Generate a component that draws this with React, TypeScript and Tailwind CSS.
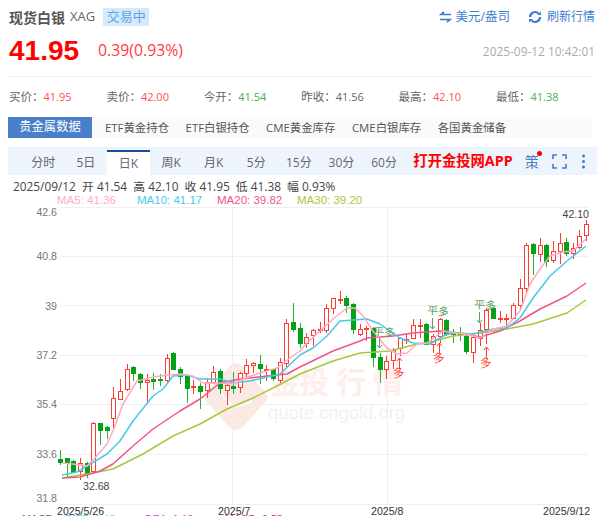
import { Fragment } from 'react'

const RED = '#ff3b30'
const GREEN = '#00a313'

// [top, bottom, high, low, colour]; x comes from the index
const CANDLES: [number, number, number, number, 'r' | 'g'][] = [
  [458, 461, 449, 464, 'g'], [457, 462, 457, 476, 'g'], [460, 471, 459, 472, 'g'], [462, 470, 457, 479, 'r'],
  [462, 472, 461, 477, 'g'], [422, 470, 421, 472, 'r'], [422, 429, 422, 444, 'g'], [426, 429, 425, 438, 'g'],
  [397, 417, 386, 430, 'r'], [390, 398, 378, 399, 'r'], [368, 388, 363, 390, 'r'], [366, 372, 365, 380, 'g'],
  [373, 381, 372, 388, 'g'], [379, 381, 373, 403, 'r'], [378, 380, 372, 389, 'g'], [378, 379, 373, 385, 'g'],
  [357, 379, 353, 383, 'r'], [352, 368, 351, 369, 'g'], [368, 375, 366, 383, 'g'], [375, 387, 373, 402, 'g'],
  [385, 386, 379, 393, 'r'], [385, 390, 382, 408, 'g'], [381, 389, 377, 397, 'r'], [371, 381, 365, 383, 'r'],
  [370, 387, 368, 393, 'g'], [384, 389, 382, 404, 'r'], [385, 387, 371, 393, 'g'], [372, 386, 371, 392, 'r'],
  [364, 372, 358, 377, 'r'], [362, 364, 361, 372, 'r'], [363, 367, 354, 383, 'g'], [368, 369, 364, 380, 'r'],
  [368, 377, 368, 380, 'g'], [361, 379, 357, 382, 'r'], [322, 362, 318, 366, 'r'], [321, 328, 302, 331, 'g'],
  [327, 342, 322, 347, 'g'], [336, 342, 332, 347, 'r'], [329, 334, 328, 345, 'r'], [328, 329, 321, 332, 'r'],
  [307, 329, 303, 332, 'r'], [297, 307, 297, 313, 'r'], [298, 299, 290, 303, 'r'], [297, 304, 295, 312, 'g'],
  [303, 328, 302, 333, 'g'], [328, 333, 323, 335, 'r'], [327, 328, 325, 340, 'r'], [327, 356, 326, 366, 'g'],
  [356, 368, 352, 382, 'g'], [360, 368, 355, 378, 'r'], [349, 359, 347, 368, 'r'], [337, 347, 336, 355, 'r'],
  [338, 339, 333, 343, 'r'], [324, 337, 318, 338, 'r'], [324, 325, 318, 337, 'r'], [323, 343, 322, 344, 'g'],
  [335, 343, 333, 352, 'r'], [318, 335, 317, 342, 'r'], [319, 333, 318, 335, 'g'], [332, 333, 328, 342, 'g'],
  [332, 333, 326, 340, 'g'], [335, 350, 334, 353, 'g'], [336, 351, 333, 362, 'r'], [329, 337, 322, 345, 'r'],
  [309, 328, 307, 343, 'r'], [307, 317, 306, 318, 'g'], [317, 318, 310, 322, 'r'], [317, 318, 313, 328, 'r'],
  [304, 317, 302, 318, 'r'], [287, 304, 278, 310, 'r'], [244, 287, 242, 292, 'r'], [243, 252, 242, 274, 'g'],
  [244, 253, 237, 261, 'r'], [244, 260, 243, 266, 'g'], [250, 259, 240, 262, 'r'], [242, 250, 232, 263, 'r'],
  [241, 252, 237, 255, 'g'], [247, 252, 242, 258, 'r'], [235, 246, 229, 248, 'r'], [223, 234, 219, 240, 'r'],
]

const MA5 = '62,462 73,463 87,465 95,457 107,443 113,430 123,403 137,380 153,376 167,374 180,373 193,375 203,382 220,382 233,383 243,378 260,372 277,367 290,357 300,350 307,342 320,330 333,318 347,307 355,307 363,315 373,330 387,347 397,353 407,352 417,343 427,342 443,330 457,332 467,333 480,337 493,328 507,325 520,310 530,283 540,268 550,255 563,251 573,250 586,238'
const MA10 = '62,474 77,471 87,465 107,453 120,440 133,420 153,395 163,388 173,375 187,374 200,378 220,378 233,382 250,380 280,373 300,354 313,347 327,335 340,320 353,319 367,318 380,323 400,337 413,342 430,343 447,333 460,332 473,333 493,328 507,327 520,317 533,297 550,275 567,260 586,245'
const MA20 = '62,477 80,476 100,470 113,463 133,445 153,428 180,410 200,398 220,382 240,378 267,375 287,373 300,366 333,350 360,340 367,337 393,335 413,332 440,330 460,332 480,336 500,330 520,320 540,308 567,295 586,282'
const MA30 = '62,477 93,472 113,468 143,453 173,435 200,423 227,408 253,397 277,385 300,373 333,360 360,352 390,350 417,343 427,342 453,335 480,332 507,328 533,323 567,312 586,299'

const STATS = [
  ['买价', '41.95', 'text-[#ff4d4f]'],
  ['卖价', '42.00', 'text-[#ff4d4f]'],
  ['今开', '41.54', 'text-[#4caf50]'],
  ['昨收', '41.56', 'text-[#666]'],
  ['最高', '42.10', 'text-[#ff4d4f]'],
  ['最低', '41.38', 'text-[#4caf50]'],
]

const TABS = ['ETF黄金持仓', 'ETF白银持仓', 'CME黄金库存', 'CME白银库存', '各国黄金储备']
const PERIODS = ['分时', '5日', '日K', '周K', '月K', '5分', '15分', '30分', '60分']

const Y_LABELS: [string, number][] = [['42.6', 215], ['40.8', 259], ['39', 309], ['37.2', 358], ['35.4', 407], ['33.6', 457], ['31.8', 501]]
const GRID_Y = [206, 255, 304, 354, 403, 453, 503]

function Chart() {
  const axis = { fontFamily: '"Liberation Sans", sans-serif', fontSize: 10.6 }
  return (
    <svg width="600" height="312" viewBox="0 204 600 312" className="block">
      {/* watermark */}
      <path d="M236 362 Q240 362 244 367 L266 392 Q269 396 266 400 L244 425 Q236 433 228 425 L206 400 Q203 396 206 392 L228 367 Q232 362 236 362 Z" fill="#fce9e4" />
      <path d="M222 392 Q232 412 252 400" fill="none" stroke="#fff" strokeWidth="2" />
      <g fill="#fdeeea" fontSize="30" fontWeight="700" fontFamily='"Noto Sans CJK SC", sans-serif'>
        <text x="270" y="392">金</text>
        <text x="299" y="392">投</text>
        <text x="336" y="392">行</text>
        <text x="373" y="392">情</text>
      </g>
      <text x="268" y="418" fill="#f1f1f1" fontSize="18.4" fontFamily='"Liberation Sans", sans-serif'>quote.cngold.org</text>

      {GRID_Y.map((y) => (
        <line key={y} x1="60" x2="588" y1={y + 0.5} y2={y + 0.5} stroke="#efefef" />
      ))}
      {[232, 387].map((x) => (
        <line key={x} x1={x + 0.5} x2={x + 0.5} y1="206" y2="503" stroke="#efefef" />
      ))}

      {Y_LABELS.map(([t, y]) => (
        <text key={t} x="57" y={y} textAnchor="end" fill="#777" {...axis}>{t}</text>
      ))}

      {CANDLES.map(([top, bottom, high, low, c], i) => {
        const x = Math.round(60 + i * 6.66) + 0.5
        const col = c === 'r' ? RED : GREEN
        return (
          <Fragment key={i}>
            <line x1={x} x2={x} y1={high} y2={low} stroke={col} strokeOpacity={c === 'g' ? 0.85 : 1} />
            {c === 'r' ? (
              <rect x={x - 2} y={top + 0.5} width="4" height={bottom - top} fill="#fff" stroke={col} />
            ) : (
              <rect x={x - 2.5} y={top} width="5" height={bottom - top + 1} fill={col} />
            )}
          </Fragment>
        )
      })}

      <g fill="none" strokeWidth="1.5" strokeLinejoin="round">
        <polyline points={MA30} stroke="#a8c83c" />
        <polyline points={MA20} stroke="#f0558a" />
        <polyline points={MA10} stroke="#45cbe8" />
        <polyline points={MA5} stroke="#ffaac4" />
      </g>

      {/* trade markers */}
      <g fontSize="11" fontFamily='"Noto Sans CJK SC", sans-serif' fill="#5c9c5c">
        <text x="373" y="335" transform="rotate(5 383 331)">平多</text>
        <text x="427" y="314" transform="rotate(5 437 310)">平多</text>
        <text x="474" y="308" transform="rotate(5 484 304)">平多</text>
      </g>
      <g stroke="#5c9c5c" fill="none" strokeWidth="1">
        <path d="M379.5 337v10m-2.5-3l2.5 3l2.5-3" />
        <path d="M432.5 317v11m-2.5-3l2.5 3l2.5-3" />
        <path d="M479.5 311v11m-2.5-3l2.5 3l2.5-3" />
      </g>
      <g stroke={RED} fill="none" strokeWidth="1">
        <path d="M399.5 368v-11m-2.5 3l2.5-3l2.5 3" />
        <path d="M439.5 353v-11m-2.5 3l2.5-3l2.5 3" />
        <path d="M486.5 357v-11m-2.5 3l2.5-3l2.5 3" />
      </g>
      <g fontSize="11.5" fontFamily='"Noto Sans CJK SC", sans-serif' fill={RED}>
        <text x="393" y="376" transform="rotate(-8 399 372)">多</text>
        <text x="433" y="361" transform="rotate(-8 439 357)">多</text>
        <text x="480" y="366" transform="rotate(-8 486 362)">多</text>
      </g>

      <text x="589" y="217" textAnchor="end" fill="#444" {...axis}>42.10</text>
      <text x="83" y="489" fill="#444" {...axis}>32.68</text>

      <g fill="#333" {...axis}>
        <text x="57" y="514">2025/5/26</text>
        <text x="218" y="514">2025/7</text>
        <text x="371" y="514">2025/8</text>
        <text x="543" y="514">2025/9/12</text>
      </g>
      <g {...axis}>
        <text x="22" y="522" fill="#666">MACD</text>
        <text x="65" y="522" fill="#4dcfe8">DIFF: 1.48</text>
        <text x="145" y="522" fill="#d63fc0">DEA: 1.19</text>
        <text x="225" y="522" fill="#f03040">MACD: 0.58</text>
      </g>
    </svg>
  )
}

export default function App() {
  return (
    <div className="h-[516px] w-[600px] overflow-hidden bg-white font-['Open_Sans','Noto_Sans_CJK_SC',sans-serif] text-[12px] text-[#666]">
      <div className="mt-2 flex h-[18px] items-center pl-[9px] pr-[5px]">
        <span className="text-[14px] font-bold text-[#555]">现货白银</span>
        <span className="ml-[5px] text-[13px]">XAG</span>
        <span className="ml-[8px] flex h-[18px] w-[46px] items-center justify-center bg-[#d6e9fb] text-[13px] text-[#5ba4e6]">交易中</span>
        <div className="ml-auto flex items-center text-[#3f7cd0]">
          <svg width="13" height="12" viewBox="0 0 13 12" fill="none" stroke="#3a7bd5" strokeWidth="1.7">
            <path d="M12 3.5H2M5 1L2 3.5L5 3.5" />
            <path d="M1 8.5H11M8 11L11 8.5H8" />
          </svg>
          <span className="ml-[3px] text-[12.5px]">美元/盎司</span>
          <svg className="ml-[18px]" width="14" height="14" viewBox="0 0 14 14" fill="none" stroke="#3a7bd5" strokeWidth="2.2">
            <path d="M2 7a5 5 0 0 1 8.5-3.5" />
            <path d="M12 7a5 5 0 0 1-8.5 3.5" />
            <path d="M9 5h4V1.5z" fill="#3a7bd5" stroke="none" />
            <path d="M5 9H1v3.5z" fill="#3a7bd5" stroke="none" />
          </svg>
          <span className="ml-[5px]">刷新行情</span>
        </div>
      </div>

      <div className="mt-[10px] flex h-[30px] items-center px-[9px]">
        <span className="font-['Liberation_Sans',sans-serif] text-[28px] font-bold text-[#ff0000]">41.95</span>
        <span className="ml-[19px] text-[15.8px] text-[#ff3b3b]">0.39(0.93%)</span>
        <span className="ml-auto mt-[2px] mr-[-4px] text-[11.9px] text-[#aaa]">2025-09-12 10:42:01</span>
      </div>

      <div className="mx-2 mt-[10px] border-t border-[#f0f0f0]" />

      <div className="mt-[11px] grid h-[18px] grid-cols-[repeat(6,97.4px)] items-center pl-[9px]">
        {STATS.map(([label, value, cls]) => (
          <div key={label} className="whitespace-nowrap text-[11.5px]">
            {label}：<span className={`text-[11px] ${cls}`}>{value}</span>
          </div>
        ))}
      </div>

      <div className="mx-2 mt-[11px] flex h-[21px] items-center bg-[#fafafa] text-[11.4px] text-[#555]">
        <div className="flex h-full w-[84px] items-center justify-center bg-[#4a7fc9] text-[12.3px] text-white">贵金属数据</div>
        <div className="ml-[13px] flex gap-[16.5px]">
          {TABS.map((t) => (
            <span key={t} className="whitespace-nowrap">{t}</span>
          ))}
        </div>
      </div>

      <div className="relative mx-2 mt-[9px] flex h-[28px] w-[589px] items-end bg-[#eef4fc] pl-[14px]">
        {PERIODS.map((p) => (
          <div
            key={p}
            className={
              p === '日K'
                ? 'flex h-[25px] w-[42.6px] items-center justify-center border-t-2 border-[#1e4b9c] bg-white'
                : 'flex h-[25px] w-[42.6px] items-center justify-center'
            }
          >
            {p}
          </div>
        ))}
        <span className="ml-[8px] self-center whitespace-nowrap text-[14.3px] font-bold text-[#ff0000]">打开金投网APP</span>
        <span className="ml-[12px] self-center text-[14px] text-[#4a80c4]">策</span>
        <span className="absolute left-[529px] top-[4px] h-[5px] w-[5px] rounded-full bg-[#ff0000]" />
        <svg className="ml-[13px] self-center" width="15" height="15" viewBox="0 0 15 15" fill="none" stroke="#3f7cc8" strokeWidth="1.6">
          <path d="M1 5V1h4M10 1h4v4M14 10v4h-4M5 14H1v-4" />
        </svg>
        <svg className="ml-[14px] self-center" width="5" height="15" viewBox="0 0 5 15" fill="#3f7cc8">
          <circle cx="2.5" cy="2" r="1.5" />
          <circle cx="2.5" cy="7.5" r="1.5" />
          <circle cx="2.5" cy="13" r="1.5" />
        </svg>
      </div>

      <div className="mt-[4px] flex h-[15px] items-center whitespace-nowrap pl-[13px] text-[11.85px] text-[#444]">
        2025/09/12&nbsp; 开 41.54&nbsp; 高 42.10&nbsp; 收 41.95&nbsp; 低 41.38&nbsp; 幅 0.93%
      </div>
      <div className="mt-[2px] flex h-[10px] items-center whitespace-nowrap pl-[57px] font-['Liberation_Sans',sans-serif] text-[11.5px]">
        <span className="w-[80px] text-[#ffaac4]">MA5: 41.36</span>
        <span className="w-[80px] text-[#45cbe8]">MA10: 41.17</span>
        <span className="w-[80px] text-[#f0558a]">MA20: 39.82</span>
        <span className="text-[#a8c83c]">MA30: 39.20</span>
      </div>

      <div className="-mt-[1px]">
        <Chart />
      </div>
    </div>
  )
}
